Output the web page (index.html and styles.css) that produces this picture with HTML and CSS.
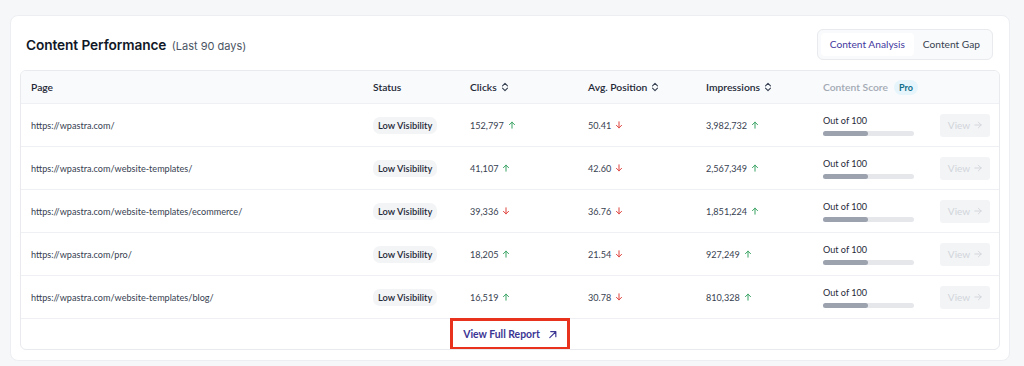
FILE: index.html
```html
<!DOCTYPE html>
<html>
<head>
<meta charset="utf-8">
<link rel="stylesheet" href="styles.css">
</head>
<body>
<div class="card">
  <div class="card-head">
    <h2 class="title">Content Performance <span class="sub">(Last 90 days)</span></h2>
    <div class="tabs">
      <span class="tab active">Content Analysis</span>
      <span class="tab">Content Gap</span>
    </div>
  </div>
  <div class="table">
    <div class="row head">
      <div class="cell">Page</div>
      <div class="cell">Status</div>
      <div class="cell">Clicks <svg class="sort" viewBox="0 0 8 10"><path d="M1.5 3.8 4 1.3l2.5 2.5M1.5 6.2 4 8.7l2.5-2.5"/></svg></div>
      <div class="cell">Avg. Position <svg class="sort" viewBox="0 0 8 10"><path d="M1.5 3.8 4 1.3l2.5 2.5M1.5 6.2 4 8.7l2.5-2.5"/></svg></div>
      <div class="cell">Impressions <svg class="sort" viewBox="0 0 8 10"><path d="M1.5 3.8 4 1.3l2.5 2.5M1.5 6.2 4 8.7l2.5-2.5"/></svg></div>
      <div class="cell muted">Content Score <span class="pro">Pro</span></div>
      <div class="cell"></div>
    </div>

    <div class="row">
      <div class="cell url">https://wpastra.com/</div>
      <div class="cell"><span class="badge">Low Visibility</span></div>
      <div class="cell num">152,797 <svg class="arr up" viewBox="0 0 10 10"><path d="M5 9V1.5M1.8 4.6 5 1.4l3.2 3.2"/></svg></div>
      <div class="cell num">50.41 <svg class="arr down" viewBox="0 0 10 10"><path d="M5 1v7.5M1.8 5.4 5 8.6l3.2-3.2"/></svg></div>
      <div class="cell num">3,982,732 <svg class="arr up" viewBox="0 0 10 10"><path d="M5 9V1.5M1.8 4.6 5 1.4l3.2 3.2"/></svg></div>
      <div class="cell score"><span class="out">Out of 100</span><span class="bar"><span class="fill"></span></span></div>
      <div class="cell"><span class="view">View <svg class="va" viewBox="0 0 10 10"><path d="M1 5h8M5.5 1.5 9 5 5.5 8.5"/></svg></span></div>
    </div>

    <div class="row">
      <div class="cell url">https://wpastra.com/website-templates/</div>
      <div class="cell"><span class="badge">Low Visibility</span></div>
      <div class="cell num">41,107 <svg class="arr up" viewBox="0 0 10 10"><path d="M5 9V1.5M1.8 4.6 5 1.4l3.2 3.2"/></svg></div>
      <div class="cell num">42.60 <svg class="arr down" viewBox="0 0 10 10"><path d="M5 1v7.5M1.8 5.4 5 8.6l3.2-3.2"/></svg></div>
      <div class="cell num">2,567,349 <svg class="arr up" viewBox="0 0 10 10"><path d="M5 9V1.5M1.8 4.6 5 1.4l3.2 3.2"/></svg></div>
      <div class="cell score"><span class="out">Out of 100</span><span class="bar"><span class="fill"></span></span></div>
      <div class="cell"><span class="view">View <svg class="va" viewBox="0 0 10 10"><path d="M1 5h8M5.5 1.5 9 5 5.5 8.5"/></svg></span></div>
    </div>

    <div class="row">
      <div class="cell url">https://wpastra.com/website-templates/ecommerce/</div>
      <div class="cell"><span class="badge">Low Visibility</span></div>
      <div class="cell num">39,336 <svg class="arr down" viewBox="0 0 10 10"><path d="M5 1v7.5M1.8 5.4 5 8.6l3.2-3.2"/></svg></div>
      <div class="cell num">36.76 <svg class="arr down" viewBox="0 0 10 10"><path d="M5 1v7.5M1.8 5.4 5 8.6l3.2-3.2"/></svg></div>
      <div class="cell num">1,851,224 <svg class="arr up" viewBox="0 0 10 10"><path d="M5 9V1.5M1.8 4.6 5 1.4l3.2 3.2"/></svg></div>
      <div class="cell score"><span class="out">Out of 100</span><span class="bar"><span class="fill"></span></span></div>
      <div class="cell"><span class="view">View <svg class="va" viewBox="0 0 10 10"><path d="M1 5h8M5.5 1.5 9 5 5.5 8.5"/></svg></span></div>
    </div>

    <div class="row">
      <div class="cell url">https://wpastra.com/pro/</div>
      <div class="cell"><span class="badge">Low Visibility</span></div>
      <div class="cell num">18,205 <svg class="arr up" viewBox="0 0 10 10"><path d="M5 9V1.5M1.8 4.6 5 1.4l3.2 3.2"/></svg></div>
      <div class="cell num">21.54 <svg class="arr down" viewBox="0 0 10 10"><path d="M5 1v7.5M1.8 5.4 5 8.6l3.2-3.2"/></svg></div>
      <div class="cell num">927,249 <svg class="arr up" viewBox="0 0 10 10"><path d="M5 9V1.5M1.8 4.6 5 1.4l3.2 3.2"/></svg></div>
      <div class="cell score"><span class="out">Out of 100</span><span class="bar"><span class="fill"></span></span></div>
      <div class="cell"><span class="view">View <svg class="va" viewBox="0 0 10 10"><path d="M1 5h8M5.5 1.5 9 5 5.5 8.5"/></svg></span></div>
    </div>

    <div class="row">
      <div class="cell url">https://wpastra.com/website-templates/blog/</div>
      <div class="cell"><span class="badge">Low Visibility</span></div>
      <div class="cell num">16,519 <svg class="arr up" viewBox="0 0 10 10"><path d="M5 9V1.5M1.8 4.6 5 1.4l3.2 3.2"/></svg></div>
      <div class="cell num">30.78 <svg class="arr down" viewBox="0 0 10 10"><path d="M5 1v7.5M1.8 5.4 5 8.6l3.2-3.2"/></svg></div>
      <div class="cell num">810,328 <svg class="arr up" viewBox="0 0 10 10"><path d="M5 9V1.5M1.8 4.6 5 1.4l3.2 3.2"/></svg></div>
      <div class="cell score"><span class="out">Out of 100</span><span class="bar"><span class="fill"></span></span></div>
      <div class="cell"><span class="view">View <svg class="va" viewBox="0 0 10 10"><path d="M1 5h8M5.5 1.5 9 5 5.5 8.5"/></svg></span></div>
    </div>

    <div class="foot">
      <a class="report">View Full Report <svg class="ext" viewBox="0 0 10 10"><path d="M2 8.5 8.5 2M3 1.8h5.7v5.7"/></svg></a>
    </div>
  </div>
</div>
</body>
</html>
```

FILE: styles.css
```css
* { box-sizing: border-box; }
html, body { margin: 0; }
body {
  background: #f6f7f9;
  padding: 15px 14px 4px 10px;
  font-family: Lato, "Noto Sans", "Liberation Sans", sans-serif;
  color: #111827;
}
.card {
  background: #fff;
  border: 1px solid #eceef2;
  border-radius: 8px;
  padding: 13px 9px 10px 9px;
}
.card-head {
  display: flex;
  align-items: center;
  justify-content: space-between;
  padding: 0 7px 0 6px;
  height: 31px;
  margin-bottom: 10px;
}
.title {
  margin: 0;
  font-family: Inter, "Noto Sans", sans-serif;
  font-size: 13.7px;
  font-weight: 600;
  letter-spacing: -0.1px;
  color: #111827;
}
.sub {
  font-size: 11px;
  font-weight: 400;
  color: #4b5563;
  margin-left: 2px;
  letter-spacing: 0;
}
.tabs {
  display: flex;
  align-items: center;
  background: #f9fafb;
  border: 1px solid #e8eaee;
  border-radius: 6px;
  padding: 3px;
  height: 31px;
}
.tab {
  font-size: 10.2px;
  color: #374151;
  padding: 0 9px;
  height: 23px;
  line-height: 23px;
  border-radius: 4px;
}
.tab.active {
  background: #fff;
  color: #4338a0;
}
.table {
  border: 1px solid #e8eaee;
  border-radius: 6px;
  overflow: hidden;
}
.row {
  display: grid;
  grid-template-columns: 342px 97px 118px 118px 117px 117px 1fr;
  height: 43px;
  align-items: center;
  border-top: 1px solid #eef0f3;
}
.row.head {
  border-top: 0;
  height: 32px;
  background: #f8fafc;
  font-size: 10.3px;
  font-weight: 600;
  color: #1f2937;
}
.cell {
  padding-left: 10px;
  display: flex;
  align-items: center;
  white-space: nowrap;
}
.cell.muted { color: #a3a9b3; }
.sort {
  width: 8px;
  height: 10px;
  margin-left: 4px;
  fill: none;
  stroke: #374151;
  stroke-width: 1.1;
  stroke-linecap: round;
  stroke-linejoin: round;
}
.pro {
  margin-left: 6px;
  background: #e6f5fb;
  color: #0f6b8a;
  font-size: 9px;
  font-weight: 700;
  padding: 2px 5px;
  border-radius: 8px;
}
.url, .num {
  font-size: 9.1px;
  color: #374151;
}
.badge {
  background: #f3f4f6;
  border-radius: 7px;
  font-size: 9.3px;
  font-weight: 600;
  color: #1f2937;
  padding: 3px 5px;
}
.arr {
  width: 8px;
  height: 8px;
  margin-left: 4px;
  fill: none;
  stroke-width: 1.2;
  stroke-linecap: round;
  stroke-linejoin: round;
}
.arr.up { stroke: #2f9e5b; }
.arr.down { stroke: #dc3b35; }
.score {
  flex-direction: column;
  align-items: flex-start;
  gap: 5px;
}
.out {
  font-size: 9.1px;
  color: #1f2937;
}
.bar {
  width: 91px;
  height: 5px;
  background: #e5e7eb;
  border-radius: 3px;
  display: block;
}
.fill {
  display: block;
  width: 45px;
  height: 5px;
  background: #9ca3af;
  border-radius: 3px;
}
.view {
  width: 50px;
  height: 23px;
  background: #f3f4f6;
  border-radius: 3px;
  font-size: 10px;
  color: #d1d5db;
  display: flex;
  align-items: center;
  justify-content: center;
  gap: 4px;
}
.va {
  width: 8px;
  height: 8px;
  fill: none;
  stroke: #d1d5db;
  stroke-width: 1.2;
  stroke-linecap: round;
  stroke-linejoin: round;
}
.foot {
  border-top: 1px solid #eef0f3;
  height: 31px;
  display: flex;
  justify-content: center;
  align-items: flex-start;
}
.report {
  height: 32px;
  width: 120px;
  border: 3px solid #e8321e;
  display: flex;
  align-items: center;
  justify-content: center;
  gap: 8px;
  font-size: 10.4px;
  font-weight: 700;
  color: #3b3594;
  margin-top: -1px;
}
.ext {
  width: 9px;
  height: 9px;
  fill: none;
  stroke: #3b3594;
  stroke-width: 1.3;
  stroke-linecap: round;
  stroke-linejoin: round;
}
```
